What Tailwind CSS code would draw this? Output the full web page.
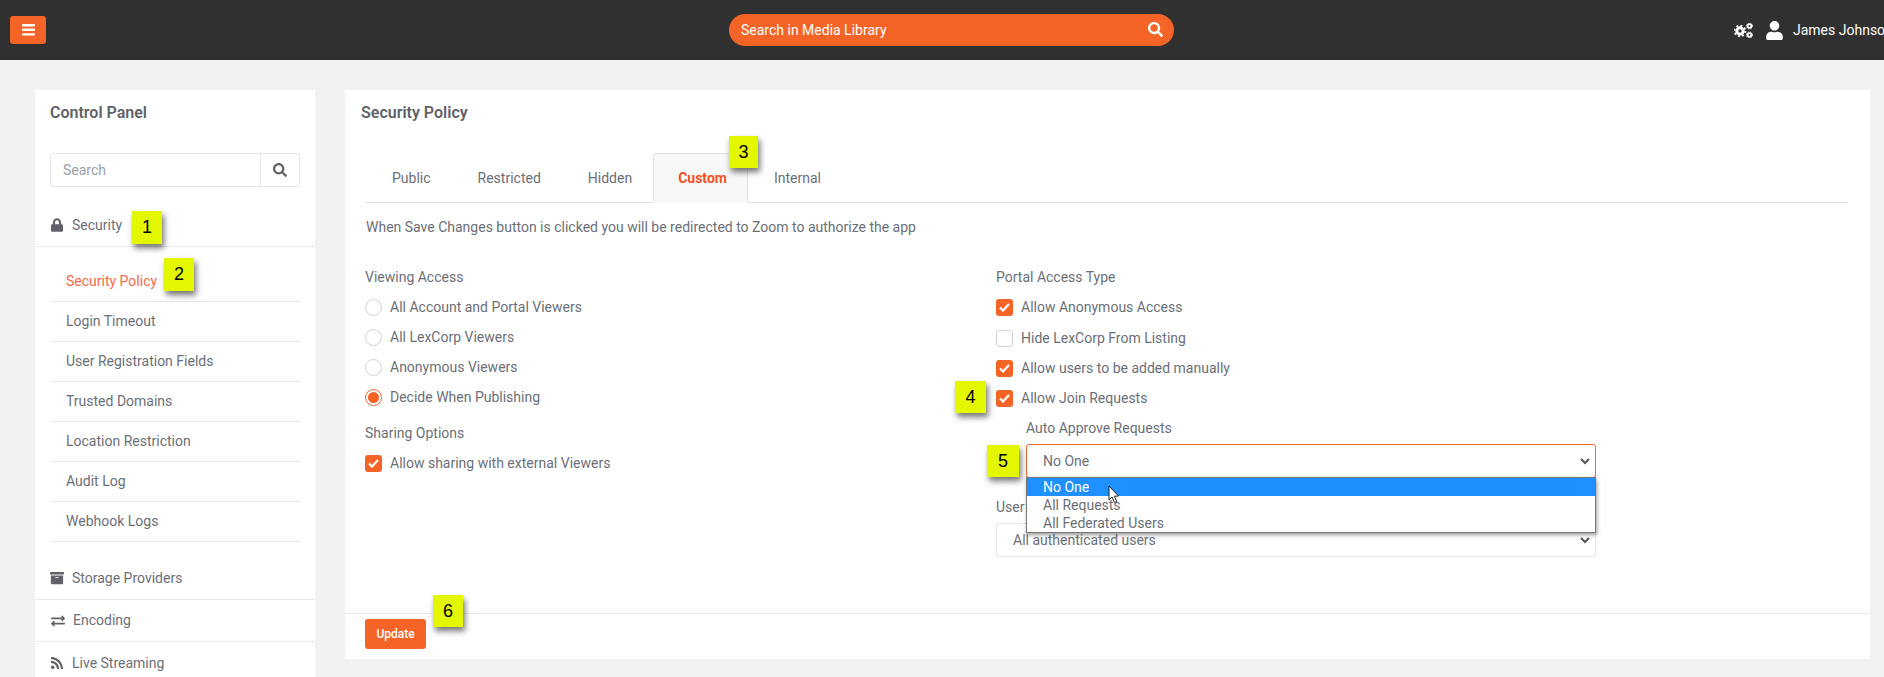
<!DOCTYPE html>
<html lang="en">
<head>
  <meta charset="UTF-8" />
  <title>Security Policy</title>
  <script src="https://cdn.jsdelivr.net/npm/@tailwindcss/browser@4"></script>
</head>
<body class="bg-[#f2f2f2] [font-family:Roboto,sans-serif] text-[14px] text-[#6b7078]">
<div class="relative w-[1884px] h-[677px] overflow-hidden">

  <!-- top bar -->
  <header class="h-[60px] bg-[#303030] flex items-center overflow-hidden">
    <button class="ml-[10px] w-[36px] h-[28px] bg-[#f56427] rounded-[3px] flex items-center justify-center shrink-0">
      <svg class="w-[13px] h-[12px]" viewBox="0 0 13 12" fill="#fff"><rect y="0" width="13" height="2.4" rx="1"/><rect y="4.6" width="13" height="2.4" rx="1"/><rect y="9.2" width="13" height="2.4" rx="1"/></svg>
    </button>
    <div class="ml-[683px] w-[445px] h-[32px] bg-[#f56427] rounded-full flex items-center justify-between pl-[12px] pr-[11px] text-white shrink-0">
      <span>Search in Media Library</span>
      <svg class="w-[15px] h-[15px] -mt-[2px]" viewBox="0 0 512 512" fill="#fff"><path d="M505 442.7L405.3 343c-4.5-4.5-10.6-7-17-7H372c27.6-35.3 44-79.7 44-128C416 93.1 322.9 0 208 0S0 93.1 0 208s93.1 208 208 208c48.3 0 92.7-16.4 128-44v16.3c0 6.4 2.5 12.5 7 17l99.7 99.7c9.4 9.4 24.6 9.4 33.9 0l28.3-28.3c9.4-9.4 9.4-24.6.1-34zM208 336c-70.7 0-128-57.2-128-128 0-70.7 57.2-128 128-128 70.7 0 128 57.2 128 128 0 70.7-57.2 128-128 128z"/></svg>
    </div>
    <svg class="ml-[560px] w-[19px] h-[15px] shrink-0" viewBox="0 0 19 15" fill="none" stroke="#fff">
      <circle cx="6" cy="8" r="3.2" stroke-width="3"/>
      <circle cx="6" cy="8" r="5.4" stroke-width="1.8" stroke-dasharray="2 2.2"/>
      <circle cx="15.5" cy="3" r="1.9" stroke-width="1.8"/>
      <circle cx="15.5" cy="3" r="3" stroke-width="1" stroke-dasharray="1.2 1.2"/>
      <circle cx="15.5" cy="12" r="1.9" stroke-width="1.8"/>
      <circle cx="15.5" cy="12" r="3" stroke-width="1" stroke-dasharray="1.2 1.2"/>
    </svg>
    <svg class="ml-[13px] w-[17px] h-[19px] shrink-0" viewBox="0 0 448 512" fill="#fff"><path d="M224 256c70.7 0 128-57.3 128-128S294.7 0 224 0 96 57.3 96 128s57.3 128 128 128zm89.6 32h-16.7c-22.2 10.2-46.9 16-72.9 16s-50.6-5.8-72.9-16h-16.7C60.2 288 0 348.2 0 422.4V464c0 26.5 21.5 48 48 48h352c26.5 0 48-21.5 48-48v-41.6c0-74.2-60.2-134.4-134.4-134.4z"/></svg>
    <span class="ml-[10px] text-white whitespace-nowrap shrink-0">James Johnson</span>
  </header>

  <div class="flex gap-[30px] pl-[35px] pt-[30px]">
    <!-- sidebar -->
    <aside class="w-[280px] h-[600px] bg-white shrink-0">
      <h2 class="h-[46px] pl-[15px] flex items-center text-[16px] font-semibold text-[#5f6368]">Control Panel</h2>
      <div class="mt-[17px] mx-[15px] h-[34px] flex border border-[#e3e6ea] rounded-[3px]">
        <input type="text" placeholder="Search" class="w-[209px] pl-[12px] text-[14px] outline-none placeholder:text-[#9a9ea5]" />
        <div class="flex-1 border-l border-[#e3e6ea] flex items-center justify-center">
          <svg class="w-[14px] h-[14px]" viewBox="0 0 512 512" fill="#5f6368"><path d="M505 442.7L405.3 343c-4.5-4.5-10.6-7-17-7H372c27.6-35.3 44-79.7 44-128C416 93.1 322.9 0 208 0S0 93.1 0 208s93.1 208 208 208c48.3 0 92.7-16.4 128-44v16.3c0 6.4 2.5 12.5 7 17l99.7 99.7c9.4 9.4 24.6 9.4 33.9 0l28.3-28.3c9.4-9.4 9.4-24.6.1-34zM208 336c-70.7 0-128-57.2-128-128 0-70.7 57.2-128 128-128 70.7 0 128 57.2 128 128 0 70.7-57.2 128-128 128z"/></svg>
        </div>
      </div>
      <div class="mt-[17px] h-[43px] flex items-center pl-[16px] border-b border-[#e6e8eb]">
        <svg class="w-[12px] h-[14px] mr-[9px]" viewBox="0 0 448 512" fill="#5f6368"><path d="M400 224h-24v-72C376 68.2 307.8 0 224 0S72 68.2 72 152v72H48c-26.5 0-48 21.5-48 48v192c0 26.5 21.5 48 48 48h352c26.5 0 48-21.5 48-48V272c0-26.5-21.5-48-48-48zm-104 0H152v-72c0-39.7 32.3-72 72-72s72 32.3 72 72v72z"/></svg>
        <span>Security</span>
      </div>
      <ul class="mt-[15px] mx-[15px]">
        <li class="h-[40px] pl-[16px] flex items-center border-b border-[#e6e8eb] text-[#f9684a]">Security Policy</li>
        <li class="h-[40px] pl-[16px] flex items-center border-b border-[#e6e8eb]">Login Timeout</li>
        <li class="h-[40px] pl-[16px] flex items-center border-b border-[#e6e8eb]">User Registration Fields</li>
        <li class="h-[40px] pl-[16px] flex items-center border-b border-[#e6e8eb]">Trusted Domains</li>
        <li class="h-[40px] pl-[16px] flex items-center border-b border-[#e6e8eb]">Location Restriction</li>
        <li class="h-[40px] pl-[16px] flex items-center border-b border-[#e6e8eb]">Audit Log</li>
        <li class="h-[40px] pl-[16px] flex items-center border-b border-[#e6e8eb]">Webhook Logs</li>
      </ul>
      <div class="mt-[15px] h-[43px] flex items-center pl-[15px] border-b border-[#e6e8eb]">
        <svg class="w-[14px] h-[14px] mr-[8px]" viewBox="0 0 512 512" fill="#5f6368"><path d="M32 448c0 17.7 14.3 32 32 32h384c17.7 0 32-14.3 32-32V160H32v288zm160-212c0-6.6 5.4-12 12-12h104c6.6 0 12 5.4 12 12v8c0 6.6-5.4 12-12 12H204c-6.6 0-12-5.4-12-12v-8zM480 32H32C14.3 32 0 46.3 0 64v48c0 8.8 7.2 16 16 16h480c8.8 0 16-7.2 16-16V64c0-17.7-14.3-32-32-32z"/></svg>
        <span>Storage Providers</span>
      </div>
      <div class="h-[42px] flex items-center pl-[16px] border-b border-[#e6e8eb]">
        <svg class="w-[14px] h-[14px] mr-[8px]" viewBox="0 0 512 512" fill="#5f6368"><path d="M0 168v-16c0-13.255 10.745-24 24-24h360V80c0-21.367 25.899-32.042 40.971-16.971l80 80c9.372 9.373 9.372 24.569 0 33.941l-80 80C409.956 271.982 384 261.456 384 240v-48H24c-13.255 0-24-10.745-24-24zm488 152H128v-48c0-21.314-25.862-32.08-40.971-16.971l-80 80c-9.372 9.373-9.372 24.569 0 33.941l80 80C102.057 463.997 128 453.437 128 432v-48h360c13.255 0 24-10.745 24-24v-16c0-13.255-10.745-24-24-24z"/></svg>
        <span>Encoding</span>
      </div>
      <div class="h-[42px] flex items-center pl-[16px]">
        <svg class="w-[12px] h-[14px] mr-[9px]" viewBox="0 0 448 512" fill="#5f6368"><path d="M128.081 415.959c0 35.369-28.672 64.041-64.041 64.041S0 451.328 0 415.959s28.672-64.041 64.041-64.041 64.04 28.673 64.04 64.041zm175.66 47.25c-8.354-154.6-132.185-278.587-286.95-286.95C7.656 175.765 0 183.105 0 192.253v48.069c0 8.415 6.49 15.472 14.887 16.018 111.832 7.284 201.473 96.702 208.772 208.772.547 8.397 7.604 14.887 16.018 14.887h48.069c9.149.001 16.489-7.655 15.995-16.79zm144.249.288C439.596 229.677 251.465 40.445 16.503 32.01 7.473 31.686 0 38.981 0 48.016v48.068c0 8.625 6.835 15.645 15.453 15.999 191.179 7.839 344.627 161.316 352.465 352.465.353 8.618 7.373 15.453 15.999 15.453h48.068c9.034-.001 16.329-7.474 16.005-16.504z"/></svg>
        <span>Live Streaming</span>
      </div>
    </aside>

    <!-- main card -->
    <main class="w-[1525px] h-[569px] bg-white flex flex-col shrink-0">
      <h2 class="h-[46px] pl-[16px] flex items-center text-[16px] font-semibold text-[#5f6368]">Security Policy</h2>
      <div class="mt-[17px] ml-[20px] mr-[22px] pl-[1px] h-[50px] flex border-b border-[#dfe1e4]">
        <div class="h-[50px] border border-transparent pl-[25px] pr-[20px] flex items-center">Public</div>
        <div class="h-[50px] border border-transparent pl-[25px] pr-[20px] flex items-center">Restricted</div>
        <div class="h-[50px] border border-transparent pl-[25px] pr-[20px] flex items-center">Hidden</div>
        <div class="h-[50px] border border-[#dfe1e4] border-b-[#f8f8f8] rounded-t-[4px] bg-[#f8f8f8] pl-[24px] pr-[20px] flex items-center font-bold text-[#f4511e]">Custom</div>
        <div class="h-[50px] border border-transparent pl-[25px] pr-[20px] flex items-center">Internal</div>
      </div>
      <p class="h-[48px] pl-[21px] flex items-center">When Save Changes button is clicked you will be redirected to Zoom to authorize the app</p>

      <div class="mt-[11px] flex pl-[20px]">
        <!-- left column -->
        <div class="w-[631px]">
          <div class="h-[30px] flex items-center">Viewing Access</div>
          <label class="h-[30px] flex items-center gap-[8px]"><span class="w-[17px] h-[17px] rounded-full border border-[#cfd2d6]"></span>All Account and Portal Viewers</label>
          <label class="h-[30px] flex items-center gap-[8px]"><span class="w-[17px] h-[17px] rounded-full border border-[#cfd2d6]"></span>All LexCorp Viewers</label>
          <label class="h-[30px] flex items-center gap-[8px]"><span class="w-[17px] h-[17px] rounded-full border border-[#cfd2d6]"></span>Anonymous Viewers</label>
          <label class="h-[30px] flex items-center gap-[8px]"><span class="w-[17px] h-[17px] rounded-full border border-[#f56427] flex items-center justify-center"><span class="w-[11px] h-[11px] rounded-full bg-[#f56427]"></span></span>Decide When Publishing</label>
          <div class="mt-[6px] h-[30px] flex items-center">Sharing Options</div>
          <label class="h-[30px] flex items-center gap-[8px]">
            <span class="w-[17px] h-[17px] rounded-[3px] bg-[#f56427] flex items-center justify-center"><svg class="w-[11px] h-[9px]" viewBox="0 0 11 9" fill="none" stroke="#fff" stroke-width="2.2"><path d="M1 4.5 L4 7.5 L10 1"/></svg></span>Allow sharing with external Viewers</label>
        </div>
        <!-- right column -->
        <div class="w-[600px]">
          <div class="h-[30px] flex items-center">Portal Access Type</div>
          <label class="h-[30px] flex items-center gap-[8px]">
            <span class="w-[17px] h-[17px] rounded-[3px] bg-[#f56427] flex items-center justify-center"><svg class="w-[11px] h-[9px]" viewBox="0 0 11 9" fill="none" stroke="#fff" stroke-width="2.2"><path d="M1 4.5 L4 7.5 L10 1"/></svg></span>Allow Anonymous Access</label>
          <label class="h-[30px] mt-[1px] flex items-center gap-[8px]"><span class="w-[17px] h-[17px] rounded-[3px] border border-[#cfd2d6]"></span>Hide LexCorp From Listing</label>
          <label class="h-[30px] flex items-center gap-[8px]">
            <span class="w-[17px] h-[17px] rounded-[3px] bg-[#f56427] flex items-center justify-center"><svg class="w-[11px] h-[9px]" viewBox="0 0 11 9" fill="none" stroke="#fff" stroke-width="2.2"><path d="M1 4.5 L4 7.5 L10 1"/></svg></span>Allow users to be added manually</label>
          <label class="h-[30px] flex items-center gap-[8px]">
            <span class="w-[17px] h-[17px] rounded-[3px] bg-[#f56427] flex items-center justify-center"><svg class="w-[11px] h-[9px]" viewBox="0 0 11 9" fill="none" stroke="#fff" stroke-width="2.2"><path d="M1 4.5 L4 7.5 L10 1"/></svg></span>Allow Join Requests</label>
          <div class="pl-[30px]">
            <div class="h-[30px] flex items-center">Auto Approve Requests</div>
            <div class="relative mt-[1px] h-[34px] border border-[#f56427] rounded-[3px] flex items-center justify-between pl-[16px] pr-[5px]">
              <span>No One</span>
              <svg class="w-[10px] h-[7px]" viewBox="0 0 10 7" fill="none" stroke="#555" stroke-width="2"><path d="M1 1 L5 5 L9 1"/></svg>
              <!-- open dropdown -->
              <div class="absolute z-10 -left-[1px] -right-[1px] top-[32px] border border-[#767676] bg-white shadow-[1px_2px_4px_rgba(0,0,0,0.4)] leading-[18px]">
                <div class="h-[18px] pl-[16px] bg-[#1e90ff] text-white">No One</div>
                <div class="h-[18px] pl-[16px]">All Requests</div>
                <div class="h-[18px] pl-[16px]">All Federated Users</div>
              </div>
            </div>
          </div>
          <div class="mt-[14px] h-[30px] flex items-center">User Registration</div>
          <div class="mt-[1px] h-[34px] border border-[#e3e6ea] rounded-[3px] flex items-center justify-between pl-[16px] pr-[5px]">
            <span>All authenticated users</span>
            <svg class="w-[10px] h-[7px]" viewBox="0 0 10 7" fill="none" stroke="#555" stroke-width="2"><path d="M1 1 L5 5 L9 1"/></svg>
          </div>
        </div>
      </div>

      <div class="mt-auto h-[46px] border-t border-[#e6e8eb] pt-[5px] pl-[20px]">
        <button class="w-[61px] h-[30px] bg-[#f56427] rounded-[3px] text-white text-[12px] font-medium">Update</button>
      </div>
    </main>
  </div>

  <!-- callout badges -->
  <div class="absolute left-[132px] top-[211px] w-[30px] h-[33px] bg-[#e2f700] shadow-[2px_4px_6px_rgba(0,0,0,0.55)] flex items-center justify-center [font-family:'Liberation_Sans',sans-serif] text-[18px] text-black">1</div>
  <div class="absolute left-[164px] top-[258px] w-[30px] h-[33px] bg-[#e2f700] shadow-[2px_4px_6px_rgba(0,0,0,0.55)] flex items-center justify-center [font-family:'Liberation_Sans',sans-serif] text-[18px] text-black">2</div>
  <div class="absolute left-[729px] top-[136px] w-[29px] h-[32px] bg-[#e2f700] shadow-[2px_4px_6px_rgba(0,0,0,0.55)] flex items-center justify-center [font-family:'Liberation_Sans',sans-serif] text-[18px] text-black">3</div>
  <div class="absolute left-[955px] top-[381px] w-[31px] h-[32px] bg-[#e2f700] shadow-[2px_4px_6px_rgba(0,0,0,0.55)] flex items-center justify-center [font-family:'Liberation_Sans',sans-serif] text-[18px] text-black">4</div>
  <div class="absolute left-[987px] top-[445px] w-[32px] h-[32px] bg-[#e2f700] shadow-[2px_4px_6px_rgba(0,0,0,0.55)] flex items-center justify-center [font-family:'Liberation_Sans',sans-serif] text-[18px] text-black">5</div>
  <div class="absolute left-[433px] top-[595px] w-[30px] h-[32px] bg-[#e2f700] shadow-[2px_4px_6px_rgba(0,0,0,0.55)] flex items-center justify-center [font-family:'Liberation_Sans',sans-serif] text-[18px] text-black">6</div>

  <!-- mouse pointer -->
  <svg class="absolute z-20 left-[1108px] top-[485px] w-[12px] h-[19px]" viewBox="0 0 12 19" fill="#fff" stroke="#222" stroke-width="1"><path d="M1 1 L1 15 L4 12 L6.5 17.5 L8.8 16.5 L6.3 11.3 L10.5 11 Z"/></svg>
</div>
</body>
</html>
